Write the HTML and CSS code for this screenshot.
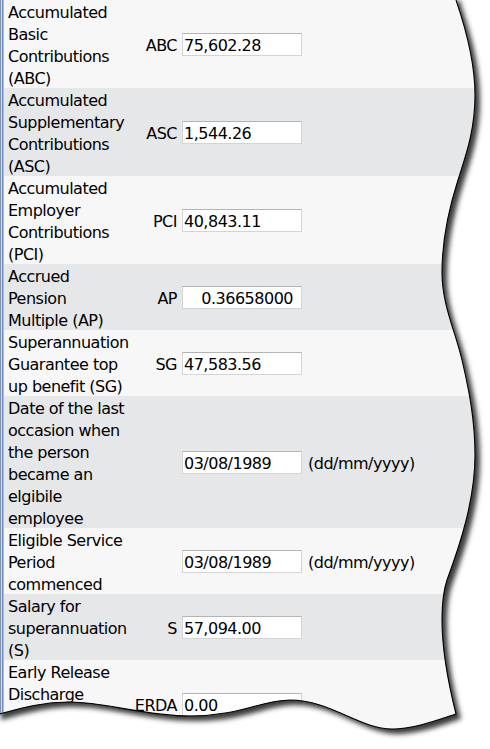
FILE: index.html
```html
<!DOCTYPE html>
<html lang="en">
<head>
<meta charset="utf-8">
<title>Superannuation details</title>
<link rel="stylesheet" href="styles.css">
</head>
<body>
<div class="sheet">
  <div class="row light">
    <div class="label">Accumulated Basic Contributions (ABC)</div>
    <div class="code">ABC</div>
    <div class="field">75,602.28</div>
  </div>
  <div class="row grey">
    <div class="label">Accumulated Supplementary Contributions (ASC)</div>
    <div class="code">ASC</div>
    <div class="field">1,544.26</div>
  </div>
  <div class="row light">
    <div class="label">Accumulated Employer Contributions (PCI)</div>
    <div class="code">PCI</div>
    <div class="field">40,843.11</div>
  </div>
  <div class="row grey">
    <div class="label">Accrued Pension <span class="nw">Multiple (AP)</span></div>
    <div class="code">AP</div>
    <div class="field right">0.36658000</div>
  </div>
  <div class="row light">
    <div class="label">Superannuation Guarantee top up benefit (SG)</div>
    <div class="code">SG</div>
    <div class="field">47,583.56</div>
  </div>
  <div class="row grey">
    <div class="label">Date of the last occasion when the person became an elgibile employee</div>
    <div class="code"></div>
    <div class="field">03/08/1989</div>
    <div class="suffix">(dd/mm/yyyy)</div>
  </div>
  <div class="row light">
    <div class="label">Eligible Service Period commenced</div>
    <div class="code"></div>
    <div class="field">03/08/1989</div>
    <div class="suffix">(dd/mm/yyyy)</div>
  </div>
  <div class="row grey">
    <div class="label">Salary for superannuation (S)</div>
    <div class="code">S</div>
    <div class="field">57,094.00</div>
  </div>
  <div class="row light">
    <div class="label">Early Release Discharge Amount<br>(ERDA)</div>
    <div class="code">ERDA</div>
    <div class="field">0.00</div>
  </div>
</div>

<svg class="torn" width="490" height="749" viewBox="0 0 490 749" aria-hidden="true">
  <defs>
    <clipPath id="outside">
      <path clip-rule="evenodd" d="M-20,-20 H510 V770 H-20 Z M-4,-4 L456,-4 L456,0 C468,35 475,65 475,95 C475,130 466,155 458,180 C450,205 442,240 442,272 C442,305 455,330 462,360 C469,390 475,420 475,455 C475,500 460,545 447,580 C443,592 442,605 442,620 C442,655 450,690 456,714 C440,719 415,729 392,729 C360,729 330,700 290,700 C262,700 240,716 190,716 C145,716 105,702 70,702 C38,702 15,710 -4,715 Z"/>
    </clipPath>
    <filter id="blur" filterUnits="userSpaceOnUse" x="-20" y="-20" width="530" height="790">
      <feGaussianBlur stdDeviation="2.4"/>
    </filter>
  </defs>
  <path class="paper-out" fill-rule="evenodd" d="M-20,-20 H510 V770 H-20 Z M-4,-4 L456,-4 L456,0 C468,35 475,65 475,95 C475,130 466,155 458,180 C450,205 442,240 442,272 C442,305 455,330 462,360 C469,390 475,420 475,455 C475,500 460,545 447,580 C443,592 442,605 442,620 C442,655 450,690 456,714 C440,719 415,729 392,729 C360,729 330,700 290,700 C262,700 240,716 190,716 C145,716 105,702 70,702 C38,702 15,710 -4,715 Z"/>
  <g clip-path="url(#outside)">
    <path class="shade" filter="url(#blur)" transform="translate(5 5)" d="M-4,-4 L456,-4 L456,0 C468,35 475,65 475,95 C475,130 466,155 458,180 C450,205 442,240 442,272 C442,305 455,330 462,360 C469,390 475,420 475,455 C475,500 460,545 447,580 C443,592 442,605 442,620 C442,655 450,690 456,714 C440,719 415,729 392,729 C360,729 330,700 290,700 C262,700 240,716 190,716 C145,716 105,702 70,702 C38,702 15,710 -4,715 Z"/>
  </g>
  <path class="edge" d="M456,0 C468,35 475,65 475,95 C475,130 466,155 458,180 C450,205 442,240 442,272 C442,305 455,330 462,360 C469,390 475,420 475,455 C475,500 460,545 447,580 C443,592 442,605 442,620 C442,655 450,690 456,714 C440,719 415,729 392,729 C360,729 330,700 290,700 C262,700 240,716 190,716 C145,716 105,702 70,702 C38,702 15,710 -4,715"/>
</svg>
</body>
</html>
```

FILE: styles.css
```css
html, body {
  margin: 0;
  padding: 0;
  background: #ffffff;
}

body {
  width: 490px;
  height: 749px;
  overflow: hidden;
  position: relative;
  font-family: "DejaVu Sans", "Liberation Sans", sans-serif;
  font-size: 16px;
  letter-spacing: -0.5px;
  color: #000000;
}

.sheet {
  padding-left: 4px;
  background: linear-gradient(to right,
    #8593ab 0 1px,
    #c9d7ee 1px 2px,
    #6e8fca 2px 3px,
    #aebcd3 3px 4px,
    transparent 4px);
}

.row {
  display: flex;
  align-items: center;
  padding-left: 4px;
}

.light { background: #f7f7f7; }
.grey { background: #e6e7e8; }

.label {
  width: 123px;
  flex: none;
  line-height: 22px;
  padding-top: 2px;
  margin-bottom: -2px;
}

.nw { white-space: nowrap; }

.code {
  width: 46px;
  flex: none;
  margin-right: 5px;
  text-align: right;
  line-height: 22px;
  padding-top: 3px;
}

.field {
  width: 120px;
  height: 23px;
  flex: none;
  box-sizing: border-box;
  background: #ffffff;
  border: 1px solid #d4d4d4;
  border-top-color: #b4b4b4;
  padding: 2px 2px 0 1px;
  line-height: 19px;
  white-space: nowrap;
}

.field.right {
  text-align: right;
  padding-right: 8px;
}

.suffix {
  margin-left: 6px;
  line-height: 22px;
  padding-top: 3px;
  white-space: nowrap;
}

.torn {
  position: absolute;
  left: 0;
  top: 0;
  pointer-events: none;
}

.paper-out { fill: #ffffff; }
.shade { fill: #3a3a3a; }
.edge {
  fill: none;
  stroke: #000000;
  stroke-width: 1.1;
}
```
